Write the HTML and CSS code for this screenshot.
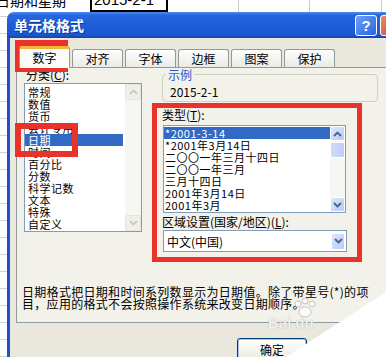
FILE: index.html
```html
<!DOCTYPE html>
<html lang="zh-CN">
<head>
    <meta charset="UTF-8">
    <meta name="viewport" content="width=device-width, initial-scale=1.0">
    <title>单元格格式</title>
    <link rel="stylesheet" href="styles.css">
</head>
<body>
    <div class="sheet">
        <div class="cell cell-a"><span>日期和星期</span></div>
        <div class="cell cell-b"><span>2015-2-1</span></div>
        <div class="cell"></div>
        <div class="cell"></div>
        <div class="cell cell-e"></div>
        <div class="cell"></div>
    </div>

    <div class="dialog">
        <div class="titlebar">
            <span class="title">单元格格式</span>
            <span class="tb-btn help">?</span>
            <span class="tb-btn close">×</span>
        </div>
        <div class="dlg-body">
            <div class="tabs">
                <div class="tab active">数字</div>
                <div class="tab">对齐</div>
                <div class="tab">字体</div>
                <div class="tab">边框</div>
                <div class="tab">图案</div>
                <div class="tab">保护</div>
            </div>
            <div class="panel">
                <div class="columns">
                    <div class="col-left">
                        <div class="label">分类(<u>C</u>):</div>
                        <div class="listbox cat-list">
                            <ul class="items">
                                <li>常规</li>
                                <li>数值</li>
                                <li>货币</li>
                                <li>会计专用</li>
                                <li class="sel">日期</li>
                                <li>时间</li>
                                <li>百分比</li>
                                <li>分数</li>
                                <li>科学记数</li>
                                <li>文本</li>
                                <li>特殊</li>
                                <li>自定义</li>
                            </ul>
                            <div class="scrollbar disabled">
                                <div class="sb-btn"><svg width="9" height="6" viewBox="0 0 9 6"><polyline points="1,5 4.5,1.5 8,5" fill="none" stroke="currentColor" stroke-width="1.6"/></svg></div>
                                <div class="sb-space"></div>
                                <div class="sb-btn"><svg width="9" height="6" viewBox="0 0 9 6"><polyline points="1,1 4.5,4.5 8,1" fill="none" stroke="currentColor" stroke-width="1.6"/></svg></div>
                            </div>
                        </div>
                    </div>
                    <div class="col-right">
                        <fieldset class="sample">
                            <legend>示例</legend>
                            <div class="sample-value">2015-2-1</div>
                        </fieldset>
                        <div class="highlight">
                            <div class="label">类型(<u>T</u>):</div>
                            <div class="listbox type-list">
                                <ul class="items">
                                    <li class="sel">*2001-3-14</li>
                                    <li>*2001年3月14日</li>
                                    <li>二〇〇一年三月十四日</li>
                                    <li>二〇〇一年三月</li>
                                    <li>三月十四日</li>
                                    <li>2001年3月14日</li>
                                    <li>2001年3月</li>
                                </ul>
                                <div class="scrollbar">
                                    <div class="sb-btn"><svg width="9" height="6" viewBox="0 0 9 6"><polyline points="1,5 4.5,1.5 8,5" fill="none" stroke="currentColor" stroke-width="1.8"/></svg></div>
                                    <div class="sb-thumb"></div>
                                    <div class="sb-space"></div>
                                    <div class="sb-btn"><svg width="9" height="6" viewBox="0 0 9 6"><polyline points="1,1 4.5,4.5 8,1" fill="none" stroke="currentColor" stroke-width="1.8"/></svg></div>
                                </div>
                            </div>
                            <div class="label label-gap">区域设置(国家/地区)(<u>L</u>):</div>
                            <div class="combo">
                                <span>中文(中国)</span>
                                <span class="drop"><svg width="9" height="6" viewBox="0 0 9 6"><polyline points="1,1 4.5,4.5 8,1" fill="none" stroke="currentColor" stroke-width="1.8"/></svg></span>
                            </div>
                        </div>
                    </div>
                </div>
                <p class="desc">日期格式把日期和时间系列数显示为日期值。除了带星号(*)的项<br>目，应用的格式不会按照操作系统来改变日期顺序。</p>
            </div>
            <div class="buttons">
                <button class="btn">确定</button>
            </div>
        </div>
    </div>

    <!-- red marks and photo artefacts on top of the dialog -->
    <div class="mark mark-tab"></div>
    <div class="mark mark-date"></div>
    <div class="watermark">
        <svg class="paw" width="30" height="20" viewBox="0 0 30 20">
            <circle cx="8" cy="6" r="3" />
            <circle cx="15" cy="3" r="3" />
            <circle cx="22" cy="6" r="3" />
            <ellipse cx="15" cy="14" rx="6" ry="5" />
        </svg>
        <span>Bai</span><span class="du">du</span>
    </div>
    <svg class="curl" width="386" height="357" viewBox="0 0 386 357">
        <polygon points="386,292 386,357 286,357" fill="#ffffff" />
    </svg>
</body>
</html>
```

FILE: styles.css
```css
body {
    margin: 0;
    width: 386px;
    height: 357px;
    overflow: hidden;
    position: relative;
    font-family: "Noto Sans CJK SC", "Liberation Sans", sans-serif;
    font-size: 12px;
    color: #000;
    background: #fff repeating-linear-gradient(to bottom, transparent 0 16px, #cdd2dc 16px 17px);
}

.sheet {
    display: flex;
    height: 12px;
    overflow: hidden;
    background-color: #fff;
}

.cell {
    width: 71px;
    flex-shrink: 0;
    box-sizing: border-box;
    border-right: 1px solid #c9cdd6;
}

.cell-a {
    width: 90px;
    border-right: 0;
}

.cell-a span {
    display: block;
    font-size: 14px;
    line-height: 16px;
    margin: -8px 0 0 -4px;
    white-space: nowrap;
}

.cell-b {
    width: 78px;
    border: 2px solid #000;
    border-top: 0;
}

.cell-b span {
    display: block;
    font-family: "Liberation Sans", sans-serif;
    font-size: 15px;
    line-height: 16px;
    margin-top: -8px;
    padding-left: 2px;
}

.cell-e {
    width: 72px;
}

.dialog {
    width: 399px;
    margin-left: 7px;
    border-top-left-radius: 7px;
    overflow: hidden;
}

.titlebar {
    display: flex;
    align-items: center;
    gap: 3px;
    height: 26px;
    padding: 0 4px 0 7px;
    background: linear-gradient(to bottom, #4b8cf2 0, #2766de 3px, #1e5dd7 50%, #1a57cf 88%, #1445a8 100%);
}

.title {
    flex: 1;
    color: #fff;
    font-size: 14px;
    font-weight: bold;
    text-shadow: 1px 1px 0 #0b3a9c;
}

.tb-btn {
    width: 22px;
    height: 21px;
    box-sizing: border-box;
    border: 1px solid #fff;
    border-radius: 3px;
    color: #fff;
    font: bold 15px "Liberation Sans", sans-serif;
    display: flex;
    align-items: center;
    justify-content: center;
}

.help {
    background: linear-gradient(135deg, #6aa2fa, #2a63de);
}

.close {
    background: linear-gradient(135deg, #ec8a62, #cc4422);
}

.dlg-body {
    height: 319px;
    box-sizing: border-box;
    border-left: 3px solid #1b52cf;
    padding: 8px 6px 0 6px;
    background-color: #eae8dd;
}

.tabs {
    display: flex;
    align-items: flex-end;
    gap: 2px;
    height: 22px;
    padding-left: 3px;
    margin-bottom: -1px;
    position: relative;
    z-index: 1;
}

.tab {
    width: 51px;
    height: 18px;
    box-sizing: border-box;
    border: 1px solid #919b9c;
    border-bottom: 0;
    border-radius: 3px 3px 0 0;
    margin-bottom: 1px;
    background: linear-gradient(to bottom, #fefefe, #ebeae4);
    text-align: center;
    line-height: 17px;
}

.tab.active {
    height: 22px;
    margin-bottom: 0;
    border-top: 3px solid #f3b43c;
    background: #fbfbf8;
    line-height: 17px;
}

.panel {
    height: 256px;
    box-sizing: border-box;
    border: 1px solid #919b9c;
    padding-left: 7px;
    background-color: #f3f2ea;
}

.columns {
    display: flex;
    gap: 10px;
}

.col-left {
    width: 118px;
    padding-top: 1px;
}

.label {
    height: 12px;
    line-height: 12px;
    white-space: nowrap;
}

.col-left .label {
    padding-left: 2px;
}

.listbox {
    display: flex;
    box-sizing: border-box;
    border: 1px solid #7f9db9;
    background-color: #fff;
}

.items {
    flex: 1;
    list-style: none;
    margin: 0;
    padding: 0;
}

.items li {
    height: 12px;
    line-height: 12px;
    font-size: 11px;
    letter-spacing: 0.5px;
    white-space: nowrap;
}

.items li.sel {
    background-color: #316ac5;
    color: #fff;
}

.cat-list {
    width: 118px;
    height: 149px;
    margin-top: 2px;
}

.cat-list .items {
    padding: 2px 2px 0 0;
}

.cat-list .items li {
    padding-left: 3px;
}

.scrollbar {
    width: 15px;
    display: flex;
    flex-direction: column;
    background-color: #f6f6f2;
}

.cat-list .scrollbar {
    width: 16px;
}

.sb-btn {
    height: 15px;
    box-sizing: border-box;
    border: 1px solid #fff;
    border-radius: 2px;
    background: linear-gradient(135deg, #dce7fd, #b7cbf6);
    color: #4d6185;
    display: flex;
    align-items: center;
    justify-content: center;
}

.sb-thumb {
    height: 16px;
    margin-top: 1px;
    box-sizing: border-box;
    border: 1px solid #fff;
    border-radius: 2px;
    background: linear-gradient(90deg, #cfdcfb, #bccff7);
}

.sb-space {
    flex: 1;
}

.scrollbar.disabled .sb-btn {
    height: 16px;
    background: #f0efe8;
    border-color: #e6e5dc;
    color: #c4c4bc;
}

.col-right {
    width: 226px;
}

.sample {
    width: 216px;
    box-sizing: border-box;
    margin: 0 0 0 10px;
    padding: 0 6px 2px 3px;
    border: 1px solid #d0d0bf;
    border-radius: 4px;
}

.sample legend {
    padding: 0 2px;
    line-height: 13px;
    color: #2358d4;
}

.sample-value {
    margin-top: 4px;
    padding-left: 4px;
    line-height: 14px;
}

.highlight {
    width: 210px;
    box-sizing: border-box;
    margin-top: 1px;
    padding: 1px 0 5px 5px;
    border: 5px solid #e8322b;
}

.type-list {
    width: 183px;
    height: 88px;
    margin: 4px 0 0 1px;
}

.type-list .items {
    padding-top: 1px;
}

.type-list .items li {
    padding-left: 1px;
}

.label-gap {
    margin-top: 3px;
}

.combo {
    display: flex;
    align-items: center;
    justify-content: space-between;
    width: 184px;
    height: 22px;
    box-sizing: border-box;
    margin: 2px 0 0 1px;
    padding: 0 1px 0 3px;
    border: 1px solid #7f9db9;
    background-color: #fff;
}

.drop {
    width: 14px;
    height: 17px;
    box-sizing: border-box;
    border: 1px solid #fff;
    border-radius: 2px;
    background: linear-gradient(135deg, #dce7fd, #b7cbf6);
    color: #4d6185;
    display: flex;
    align-items: center;
    justify-content: center;
}

.desc {
    margin: 24px 0 0 -2px;
    line-height: 12px;
    letter-spacing: 0.3px;
    white-space: nowrap;
}

.buttons {
    display: flex;
    margin-top: 15px;
    padding-left: 221px;
}

.btn {
    width: 70px;
    height: 22px;
    border: 1px solid #003c74;
    border-radius: 3px;
    background: linear-gradient(to bottom, #fff, #eceae3);
    box-shadow: inset 0 0 0 1px #a9c3ef, inset 0 -2px 0 #7ea0e0;
    font-family: "Noto Sans CJK SC", sans-serif;
    font-size: 12px;
    padding: 0;
}

.mark {
    position: absolute;
    box-sizing: border-box;
    border: 6px solid #e8322b;
}

.mark-tab {
    left: 15px;
    top: 40px;
    width: 53px;
    height: 32px;
}

.mark-date {
    left: 15px;
    top: 123px;
    width: 63px;
    height: 34px;
}

.watermark {
    position: absolute;
    left: 268px;
    top: 300px;
    color: rgba(255, 255, 255, 0.85);
    font: bold 15px "Liberation Sans", sans-serif;
    text-shadow: 0 0 1px #9a9a9a;
}

.watermark .paw {
    position: absolute;
    left: 22px;
    top: -2px;
    fill: rgba(255, 255, 255, 0.7);
    stroke: #c4c4c4;
    stroke-width: 1;
}

.watermark span {
    position: relative;
    top: 14px;
}

.watermark .du {
    margin-left: 4px;
}

.curl {
    position: absolute;
    left: 0;
    top: 0;
    pointer-events: none;
}
```
